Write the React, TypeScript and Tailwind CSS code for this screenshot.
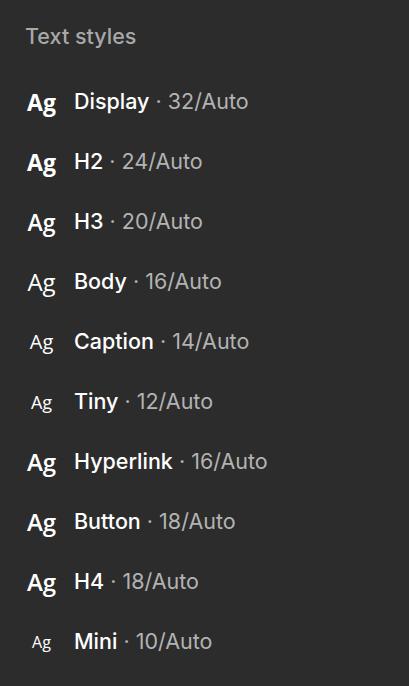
import React from "react";

const rows = [
  { name: "Display", meta: "32/Auto", cls: "text-[23px] font-bold" },
  { name: "H2", meta: "24/Auto", cls: "text-[23px] font-bold" },
  { name: "H3", meta: "20/Auto", cls: "text-[23px] font-semibold" },
  { name: "Body", meta: "16/Auto", cls: "text-[24px] font-normal" },
  { name: "Caption", meta: "14/Auto", cls: "text-[20px] font-normal" },
  { name: "Tiny", meta: "12/Auto", cls: "text-[18px] font-normal" },
  { name: "Hyperlink", meta: "16/Auto", cls: "text-[24px] font-semibold" },
  { name: "Button", meta: "18/Auto", cls: "text-[24px] font-semibold" },
  { name: "H4", meta: "18/Auto", cls: "text-[24px] font-semibold" },
  { name: "Mini", meta: "10/Auto", cls: "text-[16px] font-normal" },
];

export default function App() {
  return (
    <div className="w-[409px] h-[686px] bg-[#2c2c2c] pl-[25px] pt-[18px] overflow-hidden" style={{ fontFamily: "Inter, 'Liberation Sans', sans-serif" }}>
      <div className="h-[36px] flex items-center text-[21.5px] font-medium text-[#a8a8a8]">Text styles</div>
      <div className="mt-[18px] flex flex-col">
        {rows.map((r) => (
          <div key={r.name} className="h-[60px] flex items-center">
            <div className="w-[33px] flex items-center justify-center">
              <span className={`${r.cls} text-white leading-none`} style={{ fontFamily: "'Open Sans', 'Noto Sans', sans-serif" }}>Ag</span>
            </div>
            <div className="ml-[16px] text-[21.5px] leading-none">
              <span className="text-white font-medium">{r.name}</span>
              <span className="text-[#b3b3b3]"> · {r.meta}</span>
            </div>
          </div>
        ))}
      </div>
    </div>
  );
}
